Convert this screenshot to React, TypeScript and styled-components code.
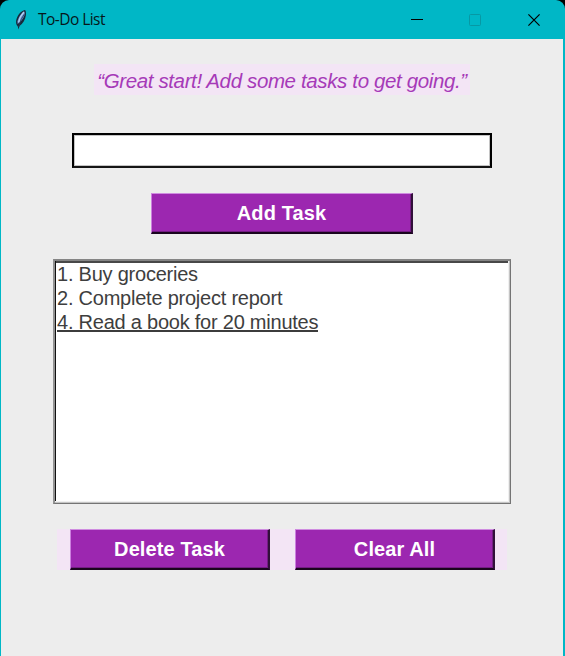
import React from "react";
import styled, { createGlobalStyle } from "styled-components";

const GlobalStyle = createGlobalStyle`
  * { box-sizing: border-box; }
  html, body { margin: 0; padding: 0; background: #000; overflow: hidden; }
`;

const Window = styled.div`
  width: 565px;
  height: 656px;
  display: flex;
  flex-direction: column;
  background: #00b7c6;
  border-radius: 9px 9px 0 0;
  overflow: hidden;
  font-family: "Liberation Sans", Arial, sans-serif;
`;

const TitleBar = styled.header`
  height: 39px;
  flex: none;
  display: flex;
  align-items: center;
  padding-left: 14px;
`;

const Title = styled.h1`
  flex: 1;
  margin: 0 0 2px 10px;
  font: 400 15.5px/20px "Open Sans", "Noto Sans", sans-serif;
  letter-spacing: -0.55px;
  color: #06171a;
`;

const Caption = styled.button<{ $dim?: boolean }>`
  width: 58px;
  height: 39px;
  display: grid;
  place-items: center;
  padding: 0;
  border: 0;
  background: none;
  color: ${(p) => (p.$dim ? "#0798a4" : "#000")};

  &:last-child {
    width: 59px;
    padding-left: 1px;
  }
`;

const Controls = styled.div`
  display: flex;
  margin-right: 2px;
`;

const Body = styled.main`
  flex: 1;
  margin: 0 2px 0 1px;
  padding-top: 25px;
  display: flex;
  flex-direction: column;
  align-items: center;
  background: #ededed;
`;

const Quote = styled.p`
  width: 376px;
  height: 31px;
  margin: 0 0 38px;
  background: #f3e5f5;
  color: #a63ab8;
  font-size: 20.5px;
  font-style: italic;
  line-height: 34px;
  text-align: center;
  white-space: nowrap;
  letter-spacing: -0.37px;
`;

const TaskInput = styled.input`
  width: 420px;
  height: 35px;
  margin-bottom: 25px;
  padding: 0 4px;
  border: 2px solid #000;
  border-bottom-color: #151515;
  border-radius: 0;
  outline: none;
  background: #fff;
  box-shadow: inset 0 0 0 1px #c4c4c4;
  font: 20px "Liberation Sans", Arial, sans-serif;
`;

const PushButton = styled.button<{ $width: number }>`
  width: ${(p) => p.$width}px;
  height: 41px;
  flex: none;
  padding: 0 0 1px;
  border-style: solid;
  border-width: 1px 2px 2px 1px;
  border-color: #cf8ce0 #32103a #1a051e #cc80df;
  background: #9c27b0;
  box-shadow: inset -1px -1px 0 #741d84;
  color: #fff;
  font: 700 20px/24px "Liberation Sans", Arial, sans-serif;
  letter-spacing: 0.1px;
  white-space: nowrap;
`;

const TaskList = styled.ul`
  width: 458px;
  height: 245px;
  flex: none;
  margin: 25px 0;
  padding: 1px 0 0 1px;
  list-style: none;
  background: #fff;
  border-style: solid;
  border-width: 2px 1px 1px 2px;
  border-color: #858585 #747474 #747474 #929292;
  box-shadow: inset -1px -1px 0 #c4c4c4, inset -2px -2px 0 #f0f0f0, inset 1px 0 0 #111,
    inset 0 2px 0 #484848;
`;

const Task = styled.li<{ $active?: boolean }>`
  height: 24px;
  padding-left: 1px;
  display: flex;
  color: #3e3e3e;
  font-size: 20px;
  line-height: 24px;
  letter-spacing: -0.23px;
  white-space: nowrap;

  span {
    height: 20px;
    box-shadow: ${(p) => (p.$active ? "0 2px 0 #3c3c3c" : "none")};
  }
`;

const Actions = styled.div`
  width: 450px;
  height: 41px;
  display: flex;
  gap: 25px;
  padding-left: 13px;
  background: #f3e5f5;
`;

const Feather = () => (
  <svg width="14" height="22" viewBox="0 0 14 22" aria-hidden="true">
    <path d="M11 .9C7 1.6 3.2 6.1 2.2 11.3c-.5 2.8.3 4.9 1.5 5.9l.8 3.3 1-3.5c3.3-2.1 5.8-6.3 6.4-10.7.3-2.5 0-4.5-.9-5.4Z" fill="#17283a" />
    <path d="M10.2 2.2C7 4.2 4.5 8 3.4 12.2l.2 2.7C7.3 12.7 10.2 8.5 10.8 4.8Z" fill="#668fce" />
    <path d="M9.9 3 6.2 8.2l-1.6 5.2" stroke="#b5d3f0" strokeWidth="1.3" fill="none" />
    <path d="m10.2 5.4-3.2 5.4-2.4 7.3" stroke="#253a58" strokeWidth=".8" fill="none" />
  </svg>
);

const tasks = [
  { id: 1, name: "Buy groceries" },
  { id: 2, name: "Complete project report" },
  { id: 4, name: "Read a book for 20 minutes", active: true },
];

export default function App() {
  return (
    <>
      <GlobalStyle />
      <Window>
        <TitleBar>
          <Feather />
          <Title>To-Do List</Title>
          <Controls>
            <Caption aria-label="Minimize">
              <svg width="12" height="12"><path d="M0 5.5h12" stroke="currentColor" /></svg>
            </Caption>
            <Caption aria-label="Maximize" $dim>
              <svg width="12" height="12"><rect x=".5" y=".5" width="11" height="11" rx="1" fill="none" stroke="currentColor" /></svg>
            </Caption>
            <Caption aria-label="Close">
              <svg width="12" height="12"><path d="m.4.4 11.2 11.2M11.6.4.4 11.6" stroke="currentColor" strokeWidth="1.2" /></svg>
            </Caption>
          </Controls>
        </TitleBar>
        <Body>
          <Quote>“Great start! Add some tasks to get going.”</Quote>
          <TaskInput aria-label="New task" />
          <PushButton $width={262}>Add Task</PushButton>
          <TaskList>
            {tasks.map((t) => (
              <Task key={t.id} $active={t.active}>
                <span>{t.id}. {t.name}</span>
              </Task>
            ))}
          </TaskList>
          <Actions>
            <PushButton $width={200}>Delete Task</PushButton>
            <PushButton $width={200}>Clear All</PushButton>
          </Actions>
        </Body>
      </Window>
    </>
  );
}
